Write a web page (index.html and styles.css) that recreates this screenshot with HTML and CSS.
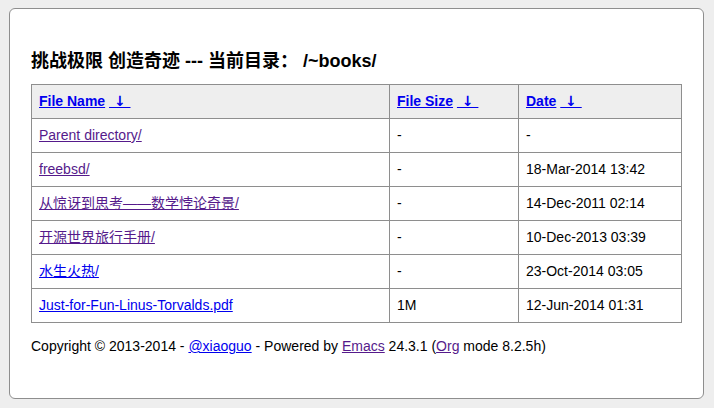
FILE: index.html
```html
<!DOCTYPE html>
<html lang="zh-CN">
<head>
    <meta charset="UTF-8">
    <meta name="viewport" content="width=device-width, initial-scale=1.0">
    <title>/~books/</title>
    <link rel="stylesheet" href="styles.css">
</head>
<body>
    <div class="box">
        <h1>挑战极限 创造奇迹 --- 当前目录： /~books/</h1>
        <table id="list">
            <colgroup>
                <col class="c-name">
                <col class="c-size">
                <col class="c-date">
            </colgroup>
            <thead>
                <tr>
                    <th><a href="?C=N&amp;O=A">File Name</a>&nbsp;<a class="sort" href="?C=N&amp;O=D">&nbsp;&darr;&nbsp;</a></th>
                    <th><a href="?C=S&amp;O=A">File Size</a>&nbsp;<a class="sort" href="?C=S&amp;O=D">&nbsp;&darr;&nbsp;</a></th>
                    <th><a href="?C=M&amp;O=A">Date</a>&nbsp;<a class="sort" href="?C=M&amp;O=D">&nbsp;&darr;&nbsp;</a></th>
                </tr>
            </thead>
            <tbody>
                <tr>
                    <td><a class="seen" href="../">Parent directory/</a></td>
                    <td>-</td>
                    <td>-</td>
                </tr>
                <tr>
                    <td><a class="seen" href="freebsd/">freebsd/</a></td>
                    <td>-</td>
                    <td>18-Mar-2014 13:42</td>
                </tr>
                <tr>
                    <td><a class="seen" href="math/">从惊讶到思考——数学悖论奇景/</a></td>
                    <td>-</td>
                    <td>14-Dec-2011 02:14</td>
                </tr>
                <tr>
                    <td><a class="seen" href="travel/">开源世界旅行手册/</a></td>
                    <td>-</td>
                    <td>10-Dec-2013 03:39</td>
                </tr>
                <tr>
                    <td><a href="water/">水生火热/</a></td>
                    <td>-</td>
                    <td>23-Oct-2014 03:05</td>
                </tr>
                <tr>
                    <td><a href="Just-for-Fun-Linus-Torvalds.pdf">Just-for-Fun-Linus-Torvalds.pdf</a></td>
                    <td>1M</td>
                    <td>12-Jun-2014 01:31</td>
                </tr>
            </tbody>
        </table>
        <p class="footer">Copyright &copy; 2013-2014 - <a href="#">@xiaoguo</a> - Powered by <a class="seen" href="#">Emacs</a> 24.3.1 (<a class="seen" href="#">Org</a> mode 8.2.5h)</p>
    </div>
</body>
</html>
```

FILE: styles.css
```css
* {
    box-sizing: border-box;
}
html, body {
    height: 100%;
}
body {
    margin: 0;
    padding: 8px 10px 9px 9px;
    background-color: #eee;
    font-family: Helvetica, "Liberation Sans", Arial, "Noto Sans CJK SC", sans-serif;
    font-size: 14px;
    color: #000;
}
a {
    color: #0000ee;
}
a.seen {
    color: #551a8b;
}
.box {
    height: 100%;
    background: #fff;
    border: 1px solid #8e8e8e;
    border-radius: 6px;
    padding: 42px 21px 0 21px;
}
h1 {
    margin: 0 0 13px 0;
    font-size: 18px;
    line-height: 20px;
    font-weight: bold;
}
table {
    width: 100%;
    border-collapse: collapse;
    table-layout: fixed;
}
.c-name {
    width: 358px;
}
.c-size {
    width: 129px;
}
th, td {
    border: 1px solid #8e8e8e;
    padding: 8px 7px;
    line-height: 17px;
    text-align: left;
    white-space: nowrap;
}
th {
    background: #eee;
    font-weight: bold;
}
.sort {
    font-family: "DejaVu Sans", sans-serif;
    font-size: 14px;
}
.footer {
    margin: 15px 0 0 0;
    line-height: 17px;
}
```
